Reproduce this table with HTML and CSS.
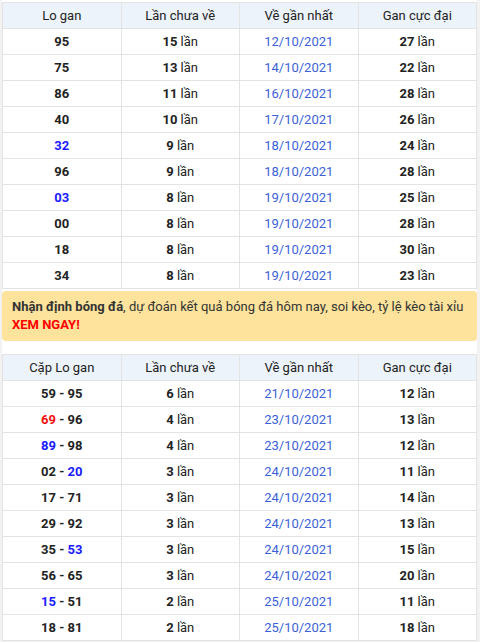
FILE: index.html
```html
<!DOCTYPE html>
<html lang="vi">
<head>
<meta charset="utf-8">
<link rel="stylesheet" href="styles.css">
</head>
<body>
<div class="page">
  <table class="gan">
    <thead>
      <tr><th>Lo gan</th><th>Lần chưa về</th><th>Về gần nhất</th><th>Gan cực đại</th></tr>
    </thead>
    <tbody>
      <tr><td><b>95</b></td><td><b>15</b> lần</td><td class="date">12/10/2021</td><td><b>27</b> lần</td></tr>
      <tr><td><b>75</b></td><td><b>13</b> lần</td><td class="date">14/10/2021</td><td><b>22</b> lần</td></tr>
      <tr><td><b>86</b></td><td><b>11</b> lần</td><td class="date">16/10/2021</td><td><b>28</b> lần</td></tr>
      <tr><td><b>40</b></td><td><b>10</b> lần</td><td class="date">17/10/2021</td><td><b>26</b> lần</td></tr>
      <tr><td><b class="blue">32</b></td><td><b>9</b> lần</td><td class="date">18/10/2021</td><td><b>24</b> lần</td></tr>
      <tr><td><b>96</b></td><td><b>9</b> lần</td><td class="date">18/10/2021</td><td><b>28</b> lần</td></tr>
      <tr><td><b class="blue">03</b></td><td><b>8</b> lần</td><td class="date">19/10/2021</td><td><b>25</b> lần</td></tr>
      <tr><td><b>00</b></td><td><b>8</b> lần</td><td class="date">19/10/2021</td><td><b>28</b> lần</td></tr>
      <tr><td><b>18</b></td><td><b>8</b> lần</td><td class="date">19/10/2021</td><td><b>30</b> lần</td></tr>
      <tr><td><b>34</b></td><td><b>8</b> lần</td><td class="date">19/10/2021</td><td><b>23</b> lần</td></tr>
    </tbody>
  </table>

  <div class="notice">
    <b>Nhận định bóng đá</b>, dự đoán kết quả bóng đá hôm nay, soi kèo, tỷ lệ kèo tài xỉu <b class="red">XEM NGAY!</b>
  </div>

  <table class="gan second">
    <thead>
      <tr><th>Cặp Lo gan</th><th>Lần chưa về</th><th>Về gần nhất</th><th>Gan cực đại</th></tr>
    </thead>
    <tbody>
      <tr><td><b>59 - 95</b></td><td><b>6</b> lần</td><td class="date">21/10/2021</td><td><b>12</b> lần</td></tr>
      <tr><td><b><span class="red">69</span> - 96</b></td><td><b>4</b> lần</td><td class="date">23/10/2021</td><td><b>13</b> lần</td></tr>
      <tr><td><b><span class="blue">89</span> - 98</b></td><td><b>4</b> lần</td><td class="date">23/10/2021</td><td><b>12</b> lần</td></tr>
      <tr><td><b>02 - <span class="blue">20</span></b></td><td><b>3</b> lần</td><td class="date">24/10/2021</td><td><b>11</b> lần</td></tr>
      <tr><td><b>17 - 71</b></td><td><b>3</b> lần</td><td class="date">24/10/2021</td><td><b>14</b> lần</td></tr>
      <tr><td><b>29 - 92</b></td><td><b>3</b> lần</td><td class="date">24/10/2021</td><td><b>13</b> lần</td></tr>
      <tr><td><b>35 - <span class="blue">53</span></b></td><td><b>3</b> lần</td><td class="date">24/10/2021</td><td><b>15</b> lần</td></tr>
      <tr><td><b>56 - 65</b></td><td><b>3</b> lần</td><td class="date">24/10/2021</td><td><b>20</b> lần</td></tr>
      <tr><td><b><span class="blue">15</span> - 51</b></td><td><b>2</b> lần</td><td class="date">25/10/2021</td><td><b>11</b> lần</td></tr>
      <tr><td><b>18 - 81</b></td><td><b>2</b> lần</td><td class="date">25/10/2021</td><td><b>18</b> lần</td></tr>
    </tbody>
  </table>
</div>
</body>
</html>
```

FILE: styles.css
```css
html, body {
  margin: 0;
  padding: 0;
  background: #f2f2f2;
}
body {
  font-family: Roboto, "Liberation Sans", Arial, sans-serif;
  font-size: 13px;
  color: #222;
}
.page {
  margin: 0 3px 0 2px;
  padding-top: 2px;
  background: #fff;
}
.gan {
  width: 100%;
  border-collapse: collapse;
  table-layout: fixed;
  background: #fff;
}
.gan th, .gan td {
  border: 1px solid #e3e3e3;
  height: 25px;
  padding: 0;
  text-align: center;
  vertical-align: middle;
}
.gan th {
  background: #edf3fb;
  font-weight: normal;
  color: #222;
}
.gan td b {
  font-weight: bold;
  color: #222;
}
.gan td .blue, .gan td b.blue {
  color: #1a1aff;
}
.gan td .red {
  color: #f01010;
}
.gan td.date {
  color: #3b5fd8;
}
.notice {
  margin-top: 2px;
  background: #fde39c;
  border-radius: 4px;
  padding: 7px 6px 7px 10px;
  line-height: 18px;
  color: #333;
}
.notice b {
  color: #333;
}
.notice b.red {
  color: #f00;
}
.second {
  margin-top: 13px;
}
```
